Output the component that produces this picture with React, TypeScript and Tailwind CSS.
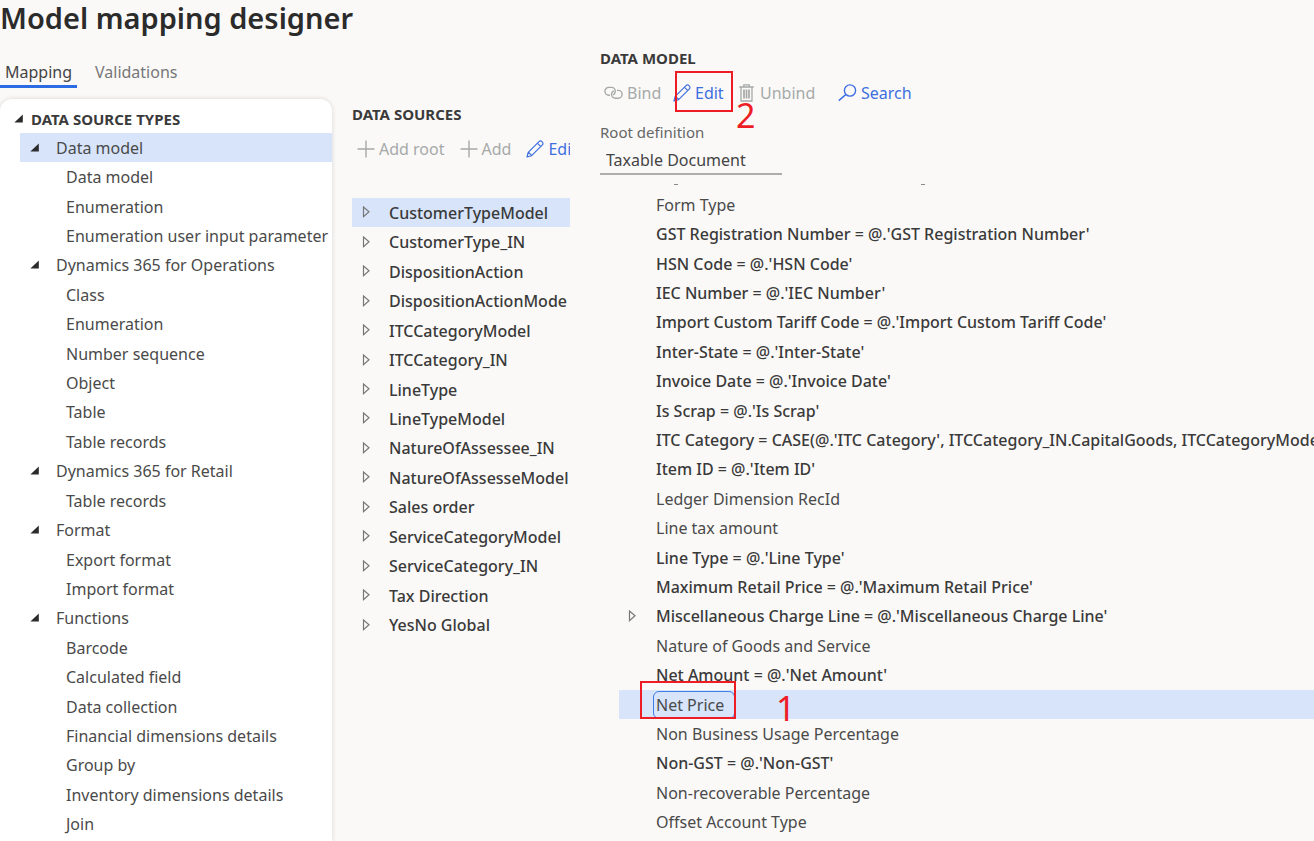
import React, { useState } from "react";

type TypeNode = { label: string; group?: boolean };
type ModelNode = { label: string; bound?: boolean; expandable?: boolean };

const sourceTypes: TypeNode[] = [
  { label: "Data model", group: true },
  { label: "Data model" },
  { label: "Enumeration" },
  { label: "Enumeration user input parameter" },
  { label: "Dynamics 365 for Operations", group: true },
  { label: "Class" },
  { label: "Enumeration" },
  { label: "Number sequence" },
  { label: "Object" },
  { label: "Table" },
  { label: "Table records" },
  { label: "Dynamics 365 for Retail", group: true },
  { label: "Table records" },
  { label: "Format", group: true },
  { label: "Export format" },
  { label: "Import format" },
  { label: "Functions", group: true },
  { label: "Barcode" },
  { label: "Calculated field" },
  { label: "Data collection" },
  { label: "Financial dimensions details" },
  { label: "Group by" },
  { label: "Inventory dimensions details" },
  { label: "Join" },
];

const dataSources = [
  "CustomerTypeModel",
  "CustomerType_IN",
  "DispositionAction",
  "DispositionActionMode",
  "ITCCategoryModel",
  "ITCCategory_IN",
  "LineType",
  "LineTypeModel",
  "NatureOfAssessee_IN",
  "NatureOfAssesseModel",
  "Sales order",
  "ServiceCategoryModel",
  "ServiceCategory_IN",
  "Tax Direction",
  "YesNo Global",
];

const modelNodes: ModelNode[] = [
  { label: "Form Type" },
  { label: "GST Registration Number = @.'GST Registration Number'", bound: true },
  { label: "HSN Code = @.'HSN Code'", bound: true },
  { label: "IEC Number = @.'IEC Number'", bound: true },
  { label: "Import Custom Tariff Code = @.'Import Custom Tariff Code'", bound: true },
  { label: "Inter-State = @.'Inter-State'", bound: true },
  { label: "Invoice Date = @.'Invoice Date'", bound: true },
  { label: "Is Scrap = @.'Is Scrap'", bound: true },
  { label: "ITC Category = CASE(@.'ITC Category', ITCCategory_IN.CapitalGoods, ITCCategoryModel", bound: true },
  { label: "Item ID = @.'Item ID'", bound: true },
  { label: "Ledger Dimension RecId" },
  { label: "Line tax amount" },
  { label: "Line Type = @.'Line Type'", bound: true },
  { label: "Maximum Retail Price = @.'Maximum Retail Price'", bound: true },
  { label: "Miscellaneous Charge Line = @.'Miscellaneous Charge Line'", bound: true, expandable: true },
  { label: "Nature of Goods and Service" },
  { label: "Net Amount = @.'Net Amount'", bound: true },
  { label: "Net Price" },
  { label: "Non Business Usage Percentage" },
  { label: "Non-GST = @.'Non-GST'", bound: true },
  { label: "Non-recoverable Percentage" },
  { label: "Offset Account Type" },
];

const ExpandedMark = () => (
  <svg width="10" height="10" viewBox="0 0 10 10" aria-hidden="true">
    <path d="M8.8 0.6V8.4H0.4Z" fill="#2b2b2b" />
  </svg>
);

const CollapsedMark = () => (
  <svg width="9" height="13" viewBox="0 0 9 13" aria-hidden="true">
    <path d="M1.5 1V10.6L7 5.8Z" fill="none" stroke="#777" strokeWidth="1.2" />
  </svg>
);

const PlusIcon = () => (
  <svg width="18" height="18" viewBox="0 0 18 18" fill="none" stroke="currentColor" strokeWidth="1.4" aria-hidden="true">
    <path d="M9 0.5V17.5M0.5 9H17.5" />
  </svg>
);

const PencilIcon = () => (
  <svg width="18" height="18" viewBox="0 0 18 18" fill="none" stroke="currentColor" strokeWidth="1.2" strokeLinejoin="round" aria-hidden="true">
    <path d="M1 17L2.2 12.4L13 1.6C13.8 0.8 15.2 0.8 16.2 1.8C17.2 2.8 17.2 4.1 16.4 4.9L5.6 15.7ZM11.4 3.2L14.8 6.6M2.4 12.2L5.8 15.6" />
  </svg>
);

const LinkIcon = () => (
  <svg width="19" height="14" viewBox="0 0 19 14" fill="none" stroke="currentColor" strokeWidth="1.4" aria-hidden="true">
    <path d="M6 9.2H4.8C2.6 9.2 0.9 7.5 0.9 5.3C0.9 3.1 2.6 1.4 4.8 1.4H7.4C9.6 1.4 11.3 3.1 11.3 5.3C11.3 6.9 10.4 8.2 9 8.8" />
    <path d="M13 4.4H14.2C16.4 4.4 18.1 6.1 18.1 8.3C18.1 10.5 16.4 12.2 14.2 12.2H11.4C9.2 12.2 7.5 10.5 7.5 8.3C7.5 6.7 8.4 5.4 9.8 4.8" />
  </svg>
);

const TrashIcon = () => (
  <svg width="15" height="18" viewBox="0 0 15 18" fill="none" stroke="currentColor" strokeWidth="1.3" aria-hidden="true">
    <path d="M0.3 3H14.7M4.8 3V0.9H10.2V3M2 3V17H13V3" />
    <path d="M5 5.5V14.5M7.5 5.5V14.5M10 5.5V14.5" strokeWidth="1.7" />
  </svg>
);

const SearchIcon = () => (
  <svg width="19" height="18" viewBox="0 0 19 18" fill="none" stroke="currentColor" strokeWidth="1.4" aria-hidden="true">
    <circle cx="12" cy="6.5" r="5.6" />
    <path d="M8 10.4L0.8 16.6" />
  </svg>
);

function SourceTypes() {
  return (
    <section className="w-[332px] shrink-0 rounded-t-xl bg-white pt-[6px] shadow-[0_0_5px_rgba(0,0,0,0.14)]">
      <h2 className="flex h-7 items-center gap-[7px] pl-[14px] text-[15px] font-bold text-[#3a3a3a]">
        <ExpandedMark />
        DATA SOURCE TYPES
      </h2>
      <ul role="tree" className="ml-5 grid min-h-[706px] auto-rows-fr text-[16px] text-[#4a4a4a]">
        {sourceTypes.map((node, i) => (
          <li
            key={i}
            role="treeitem"
            aria-selected={i === 0}
            className={`flex items-center whitespace-nowrap ${i === 0 ? "bg-[#d7e4fa]" : ""} ${node.group ? "pl-[10px]" : "pl-[46px]"}`}
          >
            {node.group && (
              <span className="w-[26px] shrink-0">
                <ExpandedMark />
              </span>
            )}
            {node.label}
          </li>
        ))}
      </ul>
    </section>
  );
}

function DataSources() {
  return (
    <section className="ml-5 min-w-0 flex-1 overflow-hidden pt-[3px]">
      <h2 className="flex h-6 items-center text-[15px] font-bold text-[#3a3a3a]">DATA SOURCES</h2>
      <div className="mt-[11px] flex h-6 items-center gap-[15px] pl-[5px] text-[16px] whitespace-nowrap">
        <button disabled className="flex shrink-0 items-center gap-1 text-[#a6a9a8]">
          <PlusIcon />
          Add root
        </button>
        <button disabled className="flex shrink-0 items-center gap-1 text-[#a6a9a8]">
          <PlusIcon />
          Add
        </button>
        <button className="flex shrink-0 items-center gap-1 text-[#3d6fe0]">
          <PencilIcon />
          Edit
        </button>
      </div>
      <ul role="tree" className="mt-[37px] grid min-h-[442px] auto-rows-fr text-[16px] font-medium text-[#3a3a3a]">
        {dataSources.map((name, i) => (
          <li
            key={name}
            role="treeitem"
            aria-selected={i === 0}
            className={`flex items-center pl-[10px] whitespace-nowrap ${i === 0 ? "bg-[#d7e4fa]" : ""}`}
          >
            <span className="w-[27px] shrink-0">
              <CollapsedMark />
            </span>
            {name}
          </li>
        ))}
      </ul>
    </section>
  );
}

function DataModel() {
  const [root, setRoot] = useState("Taxable Document");
  return (
    <section className="ml-[30px] min-w-0 flex-1 overflow-hidden pt-[46px]">
      <h2 className="flex h-6 items-center text-[15px] font-bold text-[#3a3a3a]">DATA MODEL</h2>
      <div className="mt-[11px] flex h-6 items-center pl-1 text-[16px] whitespace-nowrap">
        <button disabled className="flex w-[69px] items-center gap-1 text-[#a6a9a8]">
          <LinkIcon />
          Bind
        </button>
        <button className="relative flex w-[66px] items-center gap-1 text-[#3d6fe0]">
          <PencilIcon />
          Edit
          <span className="absolute -top-[10px] left-[2px] h-[41px] w-[58px] border-2 border-[#ee1c25]" />
          <span className="absolute top-[19px] left-[63px] text-[34px] leading-[30px] text-[#ee1c25]">2</span>
        </button>
        <button disabled className="flex w-[99px] items-center gap-[6px] text-[#a6a9a8]">
          <TrashIcon />
          Unbind
        </button>
        <button className="flex items-center gap-1 text-[#3d6fe0]">
          <SearchIcon />
          Search
        </button>
      </div>
      <label htmlFor="root-definition" className="mt-[15px] flex h-6 items-center text-[15px] text-[#666]">
        Root definition
      </label>
      <input
        id="root-definition"
        value={root}
        onChange={(e) => setRoot(e.target.value)}
        className="block h-[31px] w-[182px] border-b-2 border-[#adadad] bg-transparent px-[6px] pt-[2px] text-[16px] text-[#444] outline-none"
      />
      <div className="flex h-[15px] items-center pt-[3px] pl-[74px]" aria-hidden="true">
        <span className="h-px w-1 bg-[#8a8a8a]" />
        <span className="ml-[243px] h-px w-1 bg-[#8a8a8a]" />
      </div>
      <ul role="tree" className="ml-[19px] grid min-h-[647px] auto-rows-fr text-[16px] text-[#4a4a4a]">
        {modelNodes.map((node) => {
          const selected = node.label === "Net Price";
          return (
            <li
              key={node.label}
              role="treeitem"
              aria-selected={selected}
              className={`flex items-center whitespace-nowrap ${selected ? "bg-[#d7e4fa]" : ""} ${node.bound ? "font-medium text-[#3a3a3a]" : ""}`}
            >
              <span className="w-[37px] shrink-0 pl-[9px]">{node.expandable && <CollapsedMark />}</span>
              {selected ? (
                <span className="relative">
                  {node.label}
                  <span className="absolute -inset-y-[2px] -left-[3px] w-[82px] rounded-md border border-[#3d7be8]" />
                  <span className="absolute -top-[12px] -left-4 h-[38px] w-24 border-2 border-[#ee1c25]" />
                  <span className="absolute top-0 left-[120px] text-[34px] leading-[30px] text-[#ee1c25]">1</span>
                </span>
              ) : (
                node.label
              )}
            </li>
          );
        })}
      </ul>
    </section>
  );
}

export default function App() {
  return (
    <main className="flex h-screen overflow-hidden bg-[#faf9f8] font-['Noto_Sans','Open_Sans',sans-serif] leading-6">
      <div className="flex w-[570px] shrink-0 flex-col">
        <h1 className="flex h-9 items-center text-[29px] font-semibold whitespace-nowrap text-[#2b2b2b]">
          Model mapping designer
        </h1>
        <div role="tablist" className="mt-[22px] flex h-[30px] gap-[18px] text-[16px]">
          <button role="tab" aria-selected="true" className="flex w-[77px] items-center justify-center border-b-3 border-[#2b6be4] text-[#444]">
            Mapping
          </button>
          <button role="tab" aria-selected="false" className="flex items-center border-b-3 border-transparent text-[#777]">
            Validations
          </button>
        </div>
        <div className="mt-[11px] flex min-h-0 flex-1">
          <SourceTypes />
          <DataSources />
        </div>
      </div>
      <DataModel />
    </main>
  );
}
